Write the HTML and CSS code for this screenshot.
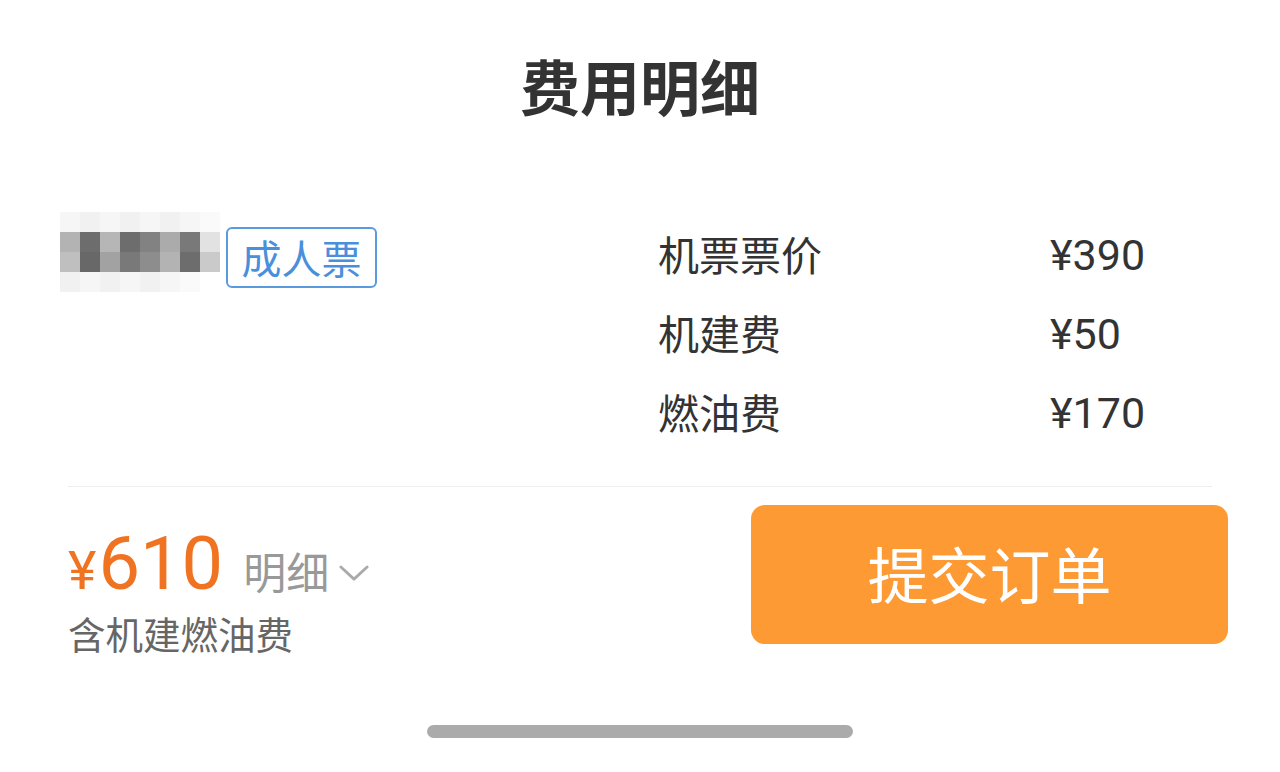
FILE: index.html
```html
<!DOCTYPE html>
<html lang="zh-CN">
<head>
<meta charset="utf-8">
<title>费用明细</title>
<link rel="stylesheet" href="styles.css">
</head>
<body>
<div class="page">
  <header class="header"><h1 class="title">费用明细</h1></header>
  <section class="detail">
    <div class="passenger">
      <div class="mosaic">
        <i class="c l1"></i><i class="c l2"></i><i class="c l1"></i><i class="c l2"></i><i class="c l1"></i><i class="c l2"></i><i class="c l1"></i><i class="c l3"></i>
        <i class="c g1"></i><i class="c d1"></i><i class="c g2"></i><i class="c d1"></i><i class="c d2"></i><i class="c g3"></i><i class="c d3"></i><i class="c w1"></i>
        <i class="c g4"></i><i class="c d4"></i><i class="c g5"></i><i class="c d3"></i><i class="c d5"></i><i class="c g1"></i><i class="c d1"></i><i class="c w2"></i>
        <i class="c l2"></i><i class="c l1"></i><i class="c l2"></i><i class="c l1"></i><i class="c l2"></i><i class="c l1"></i><i class="c l3"></i><i class="c l4"></i>
      </div>
      <span class="tag">成人票</span>
    </div>
    <div class="fees">
      <div class="fee"><span class="fee-name">机票票价</span><span class="fee-val">¥390</span></div>
      <div class="fee"><span class="fee-name">机建费</span><span class="fee-val">¥50</span></div>
      <div class="fee"><span class="fee-name">燃油费</span><span class="fee-val">¥170</span></div>
    </div>
  </section>
  <div class="divider"></div>
  <section class="footer">
    <div class="total">
      <div class="price-line">
        <span class="price"><span class="yen">¥</span>610</span>
        <span class="more">明细</span>
        <svg class="chev" width="32" height="18" viewBox="0 0 32 18"><path d="M2 2 L16 15 L30 2" fill="none" stroke="#aaaaaa" stroke-width="3" stroke-linecap="round" stroke-linejoin="round"/></svg>
      </div>
      <div class="note">含机建燃油费</div>
    </div>
    <button class="submit">提交订单</button>
  </section>
  <div class="home-wrap"><div class="home"></div></div>
</div>
</body>
</html>
```

FILE: styles.css
```css
* { box-sizing: border-box; }
html, body { margin: 0; padding: 0; background: #ffffff; }
body {
  font-family: Roboto, "Noto Sans CJK SC", "Noto Sans", sans-serif;
  color: #333333;
}
.page { width: 1280px; height: 772px; overflow: hidden; }
.header {
  height: 176px;
  display: flex;
  align-items: center;
  justify-content: center;
  padding-bottom: 6px;
}
.title {
  margin: 0;
  font-size: 60px;
  font-weight: 700;
  color: #333333;
  font-family: "Noto Sans CJK SC", sans-serif;
  line-height: 1;
}
.detail {
  display: flex;
  padding: 40px 0 33px 60px;
}
.passenger {
  width: 598px;
  display: flex;
  align-items: flex-start;
  margin-top: -4px;
}
.mosaic {
  display: grid;
  grid-template-columns: repeat(8, 20px);
  grid-template-rows: repeat(4, 20px);
}
.c { display: block; }
.l1 { background: #f6f6f6; }
.l2 { background: #f1f1f1; }
.l3 { background: #fafafa; }
.l4 { background: #ffffff; }
.g1 { background: #b3b3b3; }
.g2 { background: #b6b6b6; }
.g3 { background: #ababab; }
.g4 { background: #bfbfbf; }
.g5 { background: #a2a2a2; }
.d1 { background: #6d6d6d; }
.d2 { background: #828282; }
.d3 { background: #797979; }
.d4 { background: #686868; }
.d5 { background: #8d8d8d; }
.w1 { background: #e2e2e2; }
.w2 { background: #cacaca; }
.tag {
  margin-left: 6px;
  margin-top: 15px;
  height: 61px;
  width: 151px;
  border: 2px solid #5a9be0;
  border-radius: 6px;
  color: #4a8fdc;
  font-size: 40px;
  line-height: 1;
  font-family: "Noto Sans CJK SC", sans-serif;
  display: flex;
  align-items: center;
  justify-content: center;
  padding-bottom: 2px;
}
.fees { display: flex; flex-direction: column; }
.fee {
  display: flex;
  height: 79px;
  align-items: center;
  font-size: 41px;
  color: #333333;
}
.fee-name { width: 392px; font-family: "Noto Sans CJK SC", sans-serif; margin-top: -6px; }
.fee-val { font-size: 43px; font-family: Roboto, sans-serif; margin-top: -2px; }
.divider {
  height: 1px;
  background: #eeeeee;
  margin: 0 68px;
}
.footer {
  display: flex;
  justify-content: space-between;
  align-items: flex-start;
  padding: 18px 52px 0 68px;
}
.total { display: flex; flex-direction: column; padding-top: 21px; }
.price-line {
  display: flex;
  align-items: baseline;
  height: 76px;
}
.price {
  color: #f07322;
  font-size: 74px;
  line-height: 76px;
  font-family: Roboto, sans-serif;
}
.yen { font-size: 54px; margin-right: 2px; }
.more {
  color: #999999;
  font-size: 43px;
  margin-left: 20px;
  font-family: "Noto Sans CJK SC", sans-serif;
}
.chev { margin-left: 10px; align-self: center; margin-top: 18px; width: 30px; height: 17px; }
.note {
  font-size: 37.5px;
  color: #666666;
  line-height: 50px;
  margin-top: 6px;
  font-family: "Noto Sans CJK SC", sans-serif;
}
.submit {
  width: 477px;
  height: 139px;
  border: none;
  border-radius: 14px;
  background: #fd9a33;
  color: #ffffff;
  font-size: 61px;
  line-height: 1;
  font-family: "Noto Sans CJK SC", sans-serif;
  padding: 0 0 4px;
  cursor: pointer;
}
.home-wrap {
  display: flex;
  justify-content: center;
  padding-top: 67px;
}
.home {
  width: 426px;
  height: 13px;
  border-radius: 7px;
  background: #ababab;
}
```
